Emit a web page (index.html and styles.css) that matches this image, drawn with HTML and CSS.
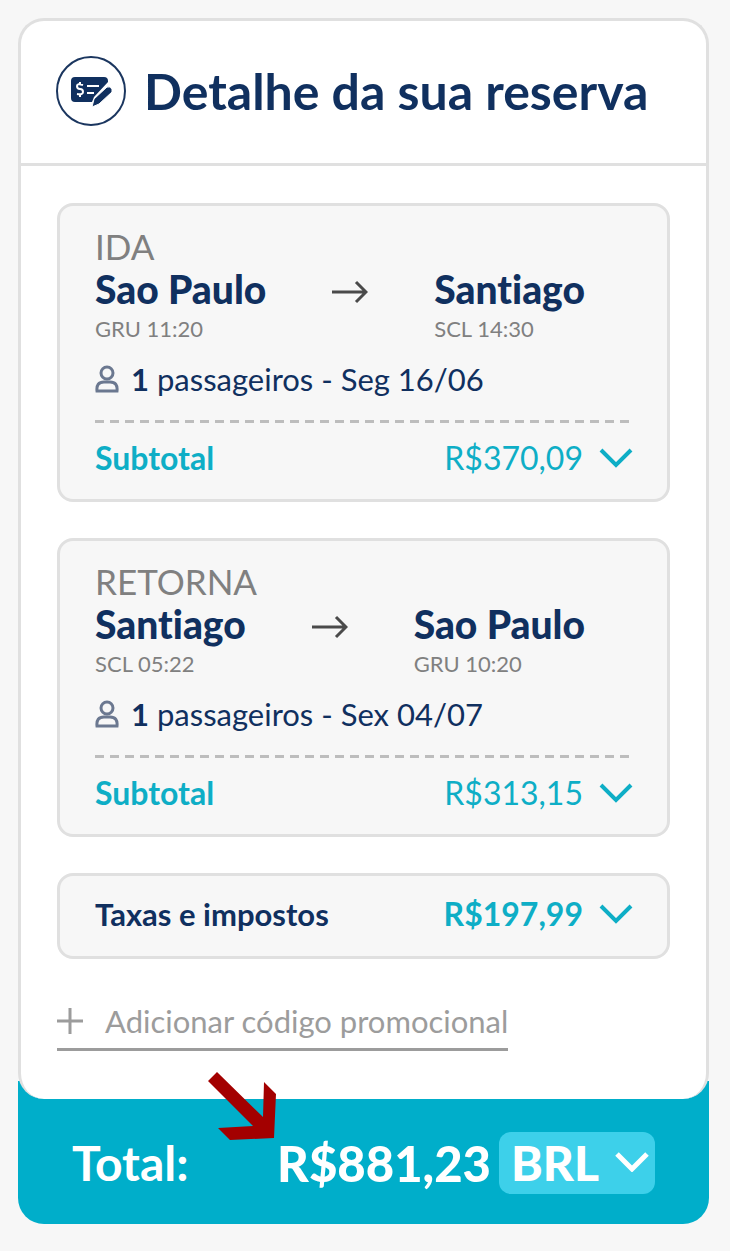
FILE: index.html
```
<!DOCTYPE html>
<html lang="pt-br">
<head>
  <meta charset="UTF-8">
  <meta name="viewport" content="width=device-width, initial-scale=1.0">
  <title>Detalhe da sua reserva</title>
  <link rel="stylesheet" href="styles.css">
</head>
<body>
  <main class="summary">
    <section class="card">
      <header class="card-header">
        <svg class="header-icon" viewBox="0 0 70 70" aria-hidden="true">
          <circle cx="35" cy="35" r="34" fill="none" stroke="#1b365f" stroke-width="2"/>
          <path fill="#10305f" d="M19 21h29q4 0 4 4v1L38 41l-2 5H19q-4 0-4-4V25q0-4 4-4z"/>
          <path fill="none" stroke="#fff" stroke-width="2" d="M27 29q-6-2-6 1t3 3 3 3-6 2M24 26v3M24 38v3M31 30h12M31 37h7"/>
          <path fill="#10305f" stroke="#fff" stroke-width="1" d="M36 51l2-8 13-12q3-1 5 2v3L43 48z"/>
        </svg>
        <h1>Detalhe da sua reserva</h1>
      </header>

      <div class="card-body">
        <article class="box">
          <h2 class="direction">IDA</h2>
          <div class="route">
            <div>
              <strong class="city">Sao Paulo</strong>
              <span class="airport">GRU 11:20</span>
            </div>
            <svg class="route-arrow" viewBox="0 0 36 24" aria-hidden="true"><path d="M0 12h34M24 2l10 10-10 10"/></svg>
            <div>
              <strong class="city">Santiago</strong>
              <span class="airport">SCL 14:30</span>
            </div>
          </div>
          <p class="passengers">
            <svg class="person" viewBox="0 0 24 28" aria-hidden="true"><circle cx="12" cy="8" r="6"/><path d="M2 26q-1-9 7-9h6q8 0 7 9z"/></svg>
            <span><b>1</b> passageiros - Seg 16/06</span>
          </p>
          <button class="price-row subtotal" type="button">
            <span class="label">Subtotal</span>
            <span>R$370,09</span>
            <svg class="chevron" viewBox="0 0 34 20" aria-hidden="true"><path d="M2 2l15 15L32 2"/></svg>
          </button>
        </article>

        <article class="box">
          <h2 class="direction">RETORNA</h2>
          <div class="route">
            <div>
              <strong class="city">Santiago</strong>
              <span class="airport">SCL 05:22</span>
            </div>
            <svg class="route-arrow" viewBox="0 0 36 24" aria-hidden="true"><path d="M0 12h34M24 2l10 10-10 10"/></svg>
            <div>
              <strong class="city">Sao Paulo</strong>
              <span class="airport">GRU 10:20</span>
            </div>
          </div>
          <p class="passengers">
            <svg class="person" viewBox="0 0 24 28" aria-hidden="true"><circle cx="12" cy="8" r="6"/><path d="M2 26q-1-9 7-9h6q8 0 7 9z"/></svg>
            <span><b>1</b> passageiros - Sex 04/07</span>
          </p>
          <button class="price-row subtotal" type="button">
            <span class="label">Subtotal</span>
            <span>R$313,15</span>
            <svg class="chevron" viewBox="0 0 34 20" aria-hidden="true"><path d="M2 2l15 15L32 2"/></svg>
          </button>
        </article>

        <article class="box box-taxes">
          <button class="price-row taxes" type="button">
            <span class="label">Taxas e impostos</span>
            <span>R$197,99</span>
            <svg class="chevron" viewBox="0 0 34 20" aria-hidden="true"><path d="M2 2l15 15L32 2"/></svg>
          </button>
        </article>

        <a class="promo" href="#promo">
          <svg class="plus" viewBox="0 0 26 26" aria-hidden="true"><path d="M13 0v26M0 13h26"/></svg>
          <span>Adicionar código promocional</span>
        </a>
      </div>
    </section>

    <footer class="total">
      <label class="total-label" for="currency">Total:</label>
      <strong class="total-value">R$881,23</strong>
      <div class="currency">
        <select id="currency">
          <option>BRL</option>
          <option>USD</option>
        </select>
        <svg class="chevron" viewBox="0 0 34 20" aria-hidden="true"><path d="M2 2l15 15L32 2"/></svg>
      </div>
      <svg class="pointer" viewBox="0 0 68 68" aria-hidden="true"><path d="M9 0L0 9l45 45-35 2 12 12 44-2 2-44-12-12-1 35z"/></svg>
    </footer>
  </main>
</body>
</html>
```
FILE: styles.css
```
* {
  box-sizing: border-box;
}
body {
  margin: 0;
  padding: 18px 21px 27px 18px;
  background-color: #f7f7f7;
  font-family: Lato, "Liberation Sans", sans-serif;
  font-size: 31px;
  line-height: 40px;
  font-variant-ligatures: none;
  color: #10305f;
}
h1, h2, p {
  margin: 0;
}
button, select {
  font: inherit;
  color: inherit;
  border: none;
  background: none;
  padding: 0;
  cursor: pointer;
}
svg {
  display: block;
  flex-shrink: 0;
}
.card {
  position: relative;
  z-index: 1;
  background-color: #fff;
  border: 3px solid #e0e0e0;
  border-bottom: none;
  border-radius: 26px;
}
.card-header {
  display: flex;
  align-items: center;
  gap: 18px;
  padding: 35px 35px 37px;
  border-bottom: 3px solid #e0e0e0;
}
.header-icon {
  width: 70px;
  height: 70px;
}
h1 {
  font-size: 50px;
  line-height: 60px;
  white-space: nowrap;
}
.card-body {
  padding: 37px 36px 48px;
}
.box {
  margin-bottom: 36px;
  padding: 20px 34px 21px 35px;
  background-color: #f7f7f7;
  border: 3px solid #e0e0e0;
  border-radius: 16px;
}
.direction {
  font-size: 35px;
  font-weight: normal;
  color: #808080;
}
.route {
  display: flex;
  align-items: flex-start;
  justify-content: space-between;
  padding-right: 48px;
}
.city {
  display: block;
  font-size: 39px;
  line-height: 46px;
  font-weight: 900;
}
.airport {
  display: block;
  font-size: 22px;
  line-height: 34px;
  color: #808080;
}
.route-arrow {
  width: 36px;
  height: 24px;
  margin-top: 14px;
  fill: none;
  stroke: #4a4a4a;
  stroke-width: 3;
}
.passengers {
  display: flex;
  align-items: center;
  gap: 12px;
  margin: 13px 0 21px;
}
.person {
  width: 24px;
  height: 28px;
  fill: none;
  stroke: #6b7890;
  stroke-width: 3;
}
.price-row {
  display: flex;
  align-items: center;
  gap: 16px;
  width: 100%;
  font-size: 32px;
  color: #0eaec6;
}
.price-row .label {
  flex: 1;
  text-align: left;
  font-weight: bold;
}
.subtotal {
  padding-top: 18px;
  background: repeating-linear-gradient(to right, #bdbdbd 0 9px, transparent 9px 15px) top / 100% 3px no-repeat;
}
.box-taxes {
  padding-top: 18px;
  padding-bottom: 22px;
}
.taxes {
  font-weight: bold;
}
.taxes .label {
  font-size: 31px;
  color: #10305f;
}
.chevron {
  width: 34px;
  height: 20px;
  fill: none;
  stroke: currentColor;
  stroke-width: 4;
}
.promo {
  display: flex;
  align-items: center;
  gap: 22px;
  width: fit-content;
  margin-top: 42px;
  padding-bottom: 7px;
  border-bottom: 3px solid #9c9c9c;
  color: #9c9c9c;
  text-decoration: none;
}
.plus {
  width: 26px;
  height: 26px;
  fill: none;
  stroke: currentColor;
  stroke-width: 3;
}
.total {
  position: relative;
  display: flex;
  align-items: center;
  margin-top: -18px;
  padding: 51px 54px 30px;
  background-color: #00aeca;
  border-radius: 0 0 26px 26px;
  color: #fff;
  font-size: 48px;
  line-height: 60px;
}
.total-label {
  flex: 1;
  font-weight: bold;
}
.total-value {
  font-size: 49px;
  font-weight: 900;
}
.currency {
  position: relative;
  margin-left: 8px;
}
.currency select {
  appearance: none;
  display: block;
  width: 156px;
  height: 62px;
  padding-left: 12px;
  background-color: #3dd0ea;
  border-radius: 12px;
  font-weight: 900;
}
.currency .chevron {
  position: absolute;
  top: 20px;
  right: 6px;
  stroke-width: 5;
  pointer-events: none;
}
/* arrow laid over the card edge, pointing at the total */
.pointer {
  position: absolute;
  z-index: 2;
  left: 190px;
  top: -9px;
  width: 68px;
  height: 68px;
  fill: #a30000;
}
```
